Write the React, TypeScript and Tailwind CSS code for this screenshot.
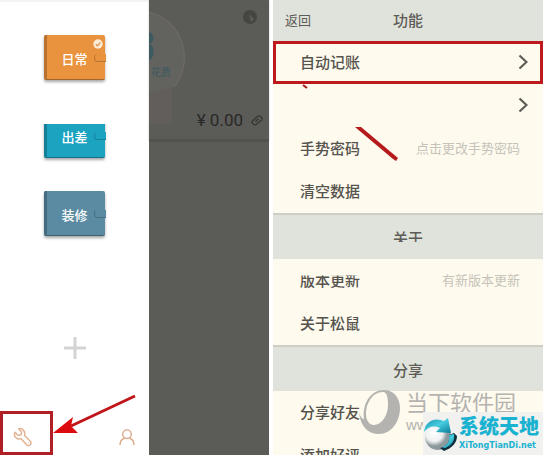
import React from "react";

interface Book {
  name: string;
  color: string;
  spine: string;
  checked?: boolean;
  cut?: boolean;
}

interface Row {
  label: string;
  hint?: string;
  arrow?: boolean;
  boxed?: boolean;
  cut?: boolean;
}

const books: Book[] = [
  { name: "日常", color: "bg-[#e9933f]", spine: "bg-[#b8722f]", checked: true },
  { name: "出差", color: "bg-[#1ba3c0]", spine: "bg-[#147f98]", cut: true },
  { name: "装修", color: "bg-[#5a8ba3]", spine: "bg-[#436c81]" },
];

const mainRows: Row[] = [
  { label: "自动记账", arrow: true, boxed: true },
  { label: "", arrow: true },
  { label: "手势密码", hint: "点击更改手势密码" },
  { label: "清空数据" },
];

const aboutRows: Row[] = [
  { label: "版本更新", hint: "有新版本更新", cut: true },
  { label: "关于松鼠" },
];

const shareRows: Row[] = [{ label: "分享好友" }, { label: "添加好评" }];

const Wallet: React.FC<{ book: Book }> = ({ book }) => (
  <button
    className={`relative flex h-[45px] w-[61px] items-center justify-center rounded-[2px] border-b border-black/30 pt-1 text-[13px] font-medium text-white shadow-[0_2px_3px_rgba(0,0,0,0.35)] ${book.color} ${book.cut ? "[clip-path:inset(11px_-8px_-8px_-8px)]" : ""}`}
  >
    <span className={`absolute inset-y-0 left-0 w-[3px] rounded-l-[2px] ${book.spine}`} />
    {book.name}
    <span className={`absolute top-[19px] -right-px h-2 w-3 rounded-l-full border-b border-l border-black/20 ${book.color}`} />
    {book.checked && (
      <svg className="absolute top-1 right-[2px] size-[10px]" viewBox="0 0 10 10">
        <circle cx="5" cy="5" r="4.7" fill="#fdebd5" />
        <path d="M2.8 5.2 4.5 6.8 7.4 3.4" fill="none" stroke="#dc924d" strokeWidth="1.2" />
      </svg>
    )}
  </button>
);

const Chevron: React.FC = () => (
  <svg className="h-4 w-[10px]" viewBox="0 0 10 16" fill="none" stroke="#5d5b54" strokeWidth="2.2">
    <path d="M1.5 1.5 8.5 8l-7 6.5" />
  </svg>
);

const SettingRow: React.FC<{ row: Row }> = ({ row }) => (
  <button
    aria-label={row.label || "更多"}
    className={`flex h-[43px] w-full shrink-0 items-center justify-between pb-0.5 text-left ${row.boxed ? "border-[3px] border-[#bd1a1d] pr-3 pl-6" : "pr-[15px] pl-[27px]"}`}
  >
    <span className={`text-[15px] leading-5 font-medium text-[#55534d] ${row.cut ? "[clip-path:inset(6px_0_0_0)]" : ""}`}>
      {row.label}
    </span>
    {row.hint && <span className="pr-2 text-[13px] leading-5 text-[#c6c3ba]">{row.hint}</span>}
    {row.arrow && <Chevron />}
  </button>
);

const SectionTitle: React.FC<{ title: string; cut?: boolean }> = ({ title, cut }) => (
  <h2 className="flex h-[46px] shrink-0 items-center justify-center border-t-2 border-[#cdcec7] bg-[#e0e3dc] pt-0.5 text-[15px] leading-5 font-medium text-[#5d5c57]">
    <span className={cut ? "[clip-path:inset(0_0_6px_0)]" : ""}>{title}</span>
  </h2>
);

const Drawer: React.FC = () => (
  <aside className="flex w-[149px] shrink-0 flex-col items-center border-t-2 border-[#f3f3f3] bg-white">
    <div className="flex flex-col gap-[33px] pt-[33px]">
      {books.map((book) => (
        <Wallet key={book.name} book={book} />
      ))}
    </div>
    <button aria-label="添加账本" className="mt-[101px]">
      <svg className="size-[22px]" viewBox="0 0 22 22" stroke="#d3d3d3" strokeWidth="3">
        <path d="M11 0v22M0 11h22" />
      </svg>
    </button>
    <div className="mt-auto flex w-full items-center justify-between">
      <button aria-label="设置" className="flex h-11 w-[53px] items-center justify-center border-[3px] border-[#b01f23] pt-2 pr-2">
        <svg className="size-5" viewBox="0 0 20 20" fill="none" stroke="#e2b08e" strokeWidth="1.4" strokeLinejoin="round">
          <path d="M5.6 1.8 8.7 5 8 7.7 5.3 8.4 2 5.2C.9 8 2 10.6 4.3 11.6c1.3.6 2.7.5 3.8.1l5.5 6c1.1 1.1 2.7 1 3.7.1 1-1 1-2.7-.2-3.8l-5.6-5.4c.6-1.8.3-3.8-1-5.3-1.2-1.4-3-2.1-4.9-1.5Z" />
          <path d="M15 15.6h.5" />
        </svg>
      </button>
      <button aria-label="我的" className="mr-[14px] pt-2">
        <svg className="size-4" viewBox="0 0 16 16" fill="none" stroke="#dda98a" strokeWidth="1.4">
          <circle cx="8" cy="5.2" r="4.3" />
          <path d="M1 16c0-3.7 2-6 4.7-7M15 16c0-3.7-2-6-4.7-7" />
        </svg>
      </button>
    </div>
  </aside>
);

const Account: React.FC = () => (
  <section className="w-[120px] shrink-0 bg-[#5b5b58]">
    <div className="relative flex h-[140px] flex-col justify-end overflow-hidden border-b border-[#53534f] pb-[7px] shadow-[0_1px_2px_rgba(0,0,0,0.2)]">
      <svg className="absolute top-0 left-0" width="120" height="130" viewBox="0 0 120 130">
        <path d="M0 72h23v52H0z" fill="#625e5b" />
        <path d="M0 12A47 47 0 0 1 25 87L0 93z" fill="#62625f" />
        <path d="M0 12A47 47 0 0 1 25 87" fill="none" stroke="#6c6861" strokeWidth="1.5" />
        <path d="M0 32c7 2 5 12 0 12 7 2 5 16 0 16z" fill="#3d5a60" />
        <circle cx="101" cy="17" r="7" fill="#454541" />
        <path d="m100 14 5 5-3 3z" fill="#5b5b58" />
      </svg>
      <span className="absolute top-16 left-[2px] text-[10px] text-[#3c5a60]">花费</span>
      <div className="flex items-center justify-end gap-2 pr-[6px] text-[#292927]">
        <span className="font-[Roboto] text-[17px] leading-6">¥ 0.00</span>
        <svg className="size-3" viewBox="0 0 12 12" fill="none" stroke="#343431" strokeWidth="1.2">
          <path d="M1 7.5 7 2q1-.8 2 0l2 2q.7.8 0 1.6L5 10.5q-1 .8-2 0L1 8.8q-.7-.6 0-1.3Z" />
          <path d="m4.5 7.5 3-2.8" />
        </svg>
      </div>
    </div>
  </section>
);

const Watermark: React.FC = () => (
  <div className="absolute right-0 bottom-0">
    <div className="flex h-[66px] w-[184px] gap-[6px]">
      <svg className="h-[46px] w-[41px] shrink-0" viewBox="0 0 41 46">
        <path
          fillRule="evenodd"
          fill="#b4b3b0"
          d="M25 1c10 0 16 8 16 18 0 14-9 26-21 26C9 45 2 38 0 24c2 4 3 6 5 6C3 14 12 1 25 1Zm-1 2C13 3 7 15 7 25c0 6 3 11 8 11 8 0 14-10 14-20 0-7-1-13-5-13Z"
        />
      </svg>
      <div className="text-[#b4b3b0]">
        <div className="text-[22px] leading-6 whitespace-nowrap">当下软件园</div>
        <div className="pt-1 font-['Liberation_Sans'] text-[15px] leading-4">www.</div>
      </div>
    </div>
    <div className="absolute right-0 bottom-0 flex h-[43px] w-[120px] items-center gap-[2px] bg-[#f1f1ef]">
      <svg className="size-[34px] shrink-0" viewBox="0 0 34 34">
        <defs>
          <radialGradient id="ball" cx="35%" cy="35%">
            <stop offset="0" stopColor="#fff" />
            <stop offset="0.65" stopColor="#eef0f1" />
            <stop offset="1" stopColor="#8d999d" />
          </radialGradient>
          <linearGradient id="ribbon" x2="1" y2="1">
            <stop offset="0" stopColor="#168fa9" />
            <stop offset="0.5" stopColor="#47cce0" />
            <stop offset="1" stopColor="#087c99" />
          </linearGradient>
        </defs>
        <circle cx="15" cy="20" r="13" fill="url(#ball)" />
        <path d="M1 15C2 4 12 0 21 4l4-3 3 15-15-1 4-4C10 8 5 10 1 15Z" fill="url(#ribbon)" />
        <path d="m26 18 5-2 3 3c0 7-5 12-13 15l-4-3c7-2 10-6 9-13Z" fill="#102f3d" />
        <path d="m26 18 5-1c1 7-2 11-9 14l-3-1c6-2 8-6 7-12Z" fill="url(#ribbon)" />
      </svg>
      <div className="text-[#1ab2d1]">
        <div className="text-[20px] leading-6 font-black whitespace-nowrap">系统天地</div>
        <div className="font-['DejaVu_Sans'] text-[8px] leading-4 font-bold">XiTongTianDi.net</div>
      </div>
    </div>
  </div>
);

const App: React.FC = () => {
  return (
    <main className="relative flex h-screen overflow-hidden bg-white font-['Noto_Sans_CJK_SC',sans-serif]">
      <Drawer />
      <Account />
      <section className="relative ml-1 flex min-w-0 flex-1 flex-col overflow-hidden bg-[#fefaee]">
        <header className="grid h-[41px] shrink-0 grid-cols-3 items-center bg-[#e0e3dc] pb-0.5 text-[#5d5c57]">
          <button className="pl-3 text-left text-[13px]">返回</button>
          <h1 className="text-center text-[15px] leading-5 font-medium">功能</h1>
        </header>
        {mainRows.map((row, index) => (
          <SettingRow key={index} row={row} />
        ))}
        <SectionTitle title="关于" cut />
        {aboutRows.map((row) => (
          <SettingRow key={row.label} row={row} />
        ))}
        <SectionTitle title="分享" />
        {shareRows.map((row) => (
          <SettingRow key={row.label} row={row} />
        ))}
        <svg className="pointer-events-none absolute top-[84px] left-[28px]" width="100" height="80" viewBox="0 0 100 80">
          <path d="m2 1 4 3" stroke="#a9191c" strokeWidth="2" />
          <path d="M54 43h6l37 31-2 3-3-2z" fill="#b51a1d" />
        </svg>
        <Watermark />
      </section>
      {/* pointer to the settings button */}
      <svg className="pointer-events-none absolute bottom-4 left-[53px]" width="84" height="46" viewBox="0 0 84 46">
        <path d="M82 3 18 33" stroke="#c01519" strokeWidth="3" />
        <path d="M0 40 20 24l-2 9 7 7z" fill="#dc0b10" />
      </svg>
    </main>
  );
};

export default App;
